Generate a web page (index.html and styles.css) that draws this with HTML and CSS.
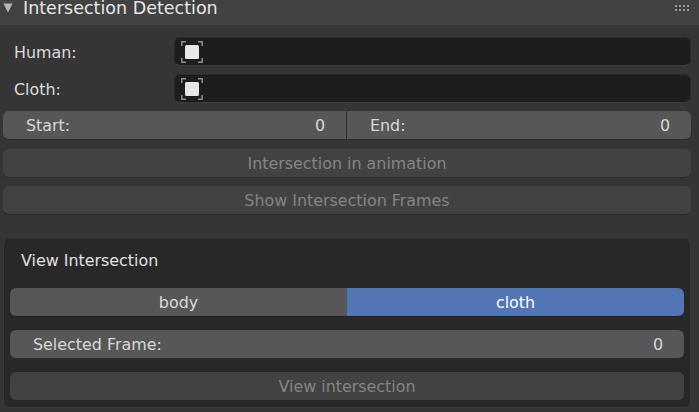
FILE: index.html
```html
<!DOCTYPE html>
<html>
	<head>
		<meta charset="utf-8">
		<title>Intersection Detection</title>
		<link rel="stylesheet" href="styles.css">
	</head>
	<body>
		<!-- panel header -->
		<div class="header">
			<svg class="arrow" width="10" height="10" viewBox="0 0 10 10"><path d="M0.5 0.5h9L5 9.5z" fill="#b4b4b4"/></svg>
			<span class="title">Intersection Detection</span>
			<svg class="grip" width="16" height="7" viewBox="0 0 16 7">
				<g fill="#9a9a9a">
					<rect x="1" y="0" width="2" height="2"/><rect x="5" y="0" width="2" height="2"/><rect x="9" y="0" width="2" height="2"/><rect x="13" y="0" width="2" height="2"/>
					<rect x="1" y="4" width="2" height="2"/><rect x="5" y="4" width="2" height="2"/><rect x="9" y="4" width="2" height="2"/><rect x="13" y="4" width="2" height="2"/>
				</g>
			</svg>
		</div>

		<div class="content">
			<div class="field-row">
				<label class="field-label">Human:</label>
				<div class="field">
					<svg class="eyedrop" width="24" height="24" viewBox="0 0 24 24">
						<path d="M1.8 6V1.8H6M18 1.8h4.2V6M1.8 18v4.2H6M22.2 18v4.2H18" fill="none" stroke="#8c8c8c" stroke-width="1.5"/>
						<rect x="5" y="5" width="14" height="14" rx="1.5" fill="#e6e6e6"/>
					</svg>
				</div>
			</div>
			<div class="field-row">
				<label class="field-label">Cloth:</label>
				<div class="field">
					<svg class="eyedrop" width="24" height="24" viewBox="0 0 24 24">
						<path d="M1.8 6V1.8H6M18 1.8h4.2V6M1.8 18v4.2H6M22.2 18v4.2H18" fill="none" stroke="#8c8c8c" stroke-width="1.5"/>
						<rect x="5" y="5" width="14" height="14" rx="1.5" fill="#e6e6e6"/>
					</svg>
				</div>
			</div>

			<div class="range">
				<div class="num num-left"><span>Start:</span><span>0</span></div>
				<div class="num num-right"><span>End:</span><span>0</span></div>
			</div>

			<div class="btn off">Intersection in animation</div>
			<div class="btn off">Show Intersection Frames</div>

			<!-- sub panel -->
			<div class="subpanel">
				<div class="sub-title">View Intersection</div>
				<div class="tabs">
					<div class="tab">body</div>
					<div class="tab active">cloth</div>
				</div>
				<div class="num single"><span>Selected Frame:</span><span>0</span></div>
				<div class="btn off wide">View intersection</div>
			</div>
		</div>
	</body>
</html>
```

FILE: styles.css
```css
* {
	margin: 0;
	padding: 0;
	box-sizing: border-box;
}

html,
body {
	height: 412px;
	overflow: hidden;
}

body {
	background-color: #353535;
	color: #e0e0e0;
	font-family: "DejaVu Sans", sans-serif;
	font-size: 15.9px;
}

.header {
	height: 25px;
	display: flex;
	align-items: center;
	padding: 0 9px 9px 3px;
	background-color: #424242;
}

.arrow {
	margin-right: 10px;
}

.title {
	flex: 1;
	font-size: 17.5px;
	line-height: 16px;
	color: #e6e6e6;
}

.content {
	padding: 12px 8px 0 3px;
}

.field-row {
	display: flex;
	align-items: center;
	height: 29px;
	margin-bottom: 8px;
}

.field-label {
	width: 171px;
	padding-left: 11px;
	padding-top: 1px;
	color: #dcdcdc;
}

.field {
	flex: 1;
	height: 29px;
	display: flex;
	align-items: center;
	padding-left: 5px;
	background-color: #1d1d1d;
	border: 1px solid #2a2a2a;
	border-bottom-color: #3e3e3e;
	border-radius: 6px;
}

.eyedrop {
	margin-top: 1px;
}

.range {
	display: flex;
	height: 29px;
	margin-bottom: 9px;
}

.num {
	display: flex;
	justify-content: space-between;
	align-items: center;
	height: 29px;
	background-color: #575757;
	border-bottom: 1px solid #2b2b2b;
	color: #d8d8d8;
}

.num-left {
	width: 344px;
	padding: 0 21px 0 23px;
	border-radius: 6px 0 0 6px;
	border-right: 1px solid #2f2f2f;
}

.num-right {
	flex: 1;
	padding: 0 21px 0 23px;
	border-radius: 0 6px 6px 0;
}

.btn {
	height: 29px;
	margin-bottom: 8px;
	display: flex;
	align-items: center;
	justify-content: center;
	border-bottom: 1px solid #2b2b2b;
	border-radius: 6px;
}

.off {
	background-color: #424242;
	color: #858585;
}

.subpanel {
	margin-top: 23px;
	height: 170px;
	padding: 11px 6px 0 6px;
	background-color: #282828;
	border: 1px solid #3a3a3a;
	border-top-color: #313131;
	border-radius: 6px;
}

.sub-title {
	height: 38px;
	padding-left: 11px;
	padding-top: 1px;
	color: #e0e0e0;
}

.tabs {
	display: flex;
	height: 29px;
	margin-bottom: 13px;
}

.tab {
	flex: 1;
	display: flex;
	align-items: center;
	justify-content: center;
	background-color: #575757;
	border-bottom: 1px solid #222;
	border-radius: 6px 0 0 6px;
	color: #dcdcdc;
}

.tab.active {
	background-color: #5275b4;
	border-radius: 0 6px 6px 0;
	color: #fff;
}

.single {
	padding: 0 21px 0 23px;
	border-radius: 6px;
	margin-bottom: 13px;
}

.wide {
	margin-bottom: 0;
}
```
